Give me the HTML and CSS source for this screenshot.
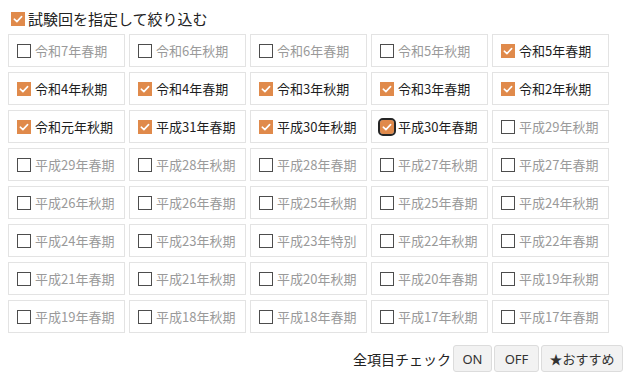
FILE: index.html
```html
<!DOCTYPE html>
<html lang="ja">
<head>
<meta charset="utf-8">
<title>試験回を指定して絞り込む</title>
<link rel="stylesheet" href="styles.css">
</head>
<body>
<div class="page">
  <div class="header">
    <span class="box on"><svg viewBox="0 0 14 14"><path d="M3.3 7.2 L5.9 9.6 L10.6 4.6"/></svg></span>
    <span class="header-text">試験回を指定して絞り込む</span>
  </div>
  <div class="grid">
    <div class="cell"><span class="box"></span><span class="label">令和7年春期</span></div>
    <div class="cell"><span class="box"></span><span class="label">令和6年秋期</span></div>
    <div class="cell"><span class="box"></span><span class="label">令和6年春期</span></div>
    <div class="cell"><span class="box"></span><span class="label">令和5年秋期</span></div>
    <div class="cell on"><span class="box on"><svg viewBox="0 0 14 14"><path d="M3.3 7.2 L5.9 9.6 L10.6 4.6"/></svg></span><span class="label">令和5年春期</span></div>

    <div class="cell on"><span class="box on"><svg viewBox="0 0 14 14"><path d="M3.3 7.2 L5.9 9.6 L10.6 4.6"/></svg></span><span class="label">令和4年秋期</span></div>
    <div class="cell on"><span class="box on"><svg viewBox="0 0 14 14"><path d="M3.3 7.2 L5.9 9.6 L10.6 4.6"/></svg></span><span class="label">令和4年春期</span></div>
    <div class="cell on"><span class="box on"><svg viewBox="0 0 14 14"><path d="M3.3 7.2 L5.9 9.6 L10.6 4.6"/></svg></span><span class="label">令和3年秋期</span></div>
    <div class="cell on"><span class="box on"><svg viewBox="0 0 14 14"><path d="M3.3 7.2 L5.9 9.6 L10.6 4.6"/></svg></span><span class="label">令和3年春期</span></div>
    <div class="cell on"><span class="box on"><svg viewBox="0 0 14 14"><path d="M3.3 7.2 L5.9 9.6 L10.6 4.6"/></svg></span><span class="label">令和2年秋期</span></div>

    <div class="cell on"><span class="box on"><svg viewBox="0 0 14 14"><path d="M3.3 7.2 L5.9 9.6 L10.6 4.6"/></svg></span><span class="label">令和元年秋期</span></div>
    <div class="cell on"><span class="box on"><svg viewBox="0 0 14 14"><path d="M3.3 7.2 L5.9 9.6 L10.6 4.6"/></svg></span><span class="label">平成31年春期</span></div>
    <div class="cell on"><span class="box on"><svg viewBox="0 0 14 14"><path d="M3.3 7.2 L5.9 9.6 L10.6 4.6"/></svg></span><span class="label">平成30年秋期</span></div>
    <div class="cell on"><span class="box on focus"><svg viewBox="0 0 14 14"><path d="M3.3 7.2 L5.9 9.6 L10.6 4.6"/></svg></span><span class="label">平成30年春期</span></div>
    <div class="cell"><span class="box"></span><span class="label">平成29年秋期</span></div>

    <div class="cell"><span class="box"></span><span class="label">平成29年春期</span></div>
    <div class="cell"><span class="box"></span><span class="label">平成28年秋期</span></div>
    <div class="cell"><span class="box"></span><span class="label">平成28年春期</span></div>
    <div class="cell"><span class="box"></span><span class="label">平成27年秋期</span></div>
    <div class="cell"><span class="box"></span><span class="label">平成27年春期</span></div>

    <div class="cell"><span class="box"></span><span class="label">平成26年秋期</span></div>
    <div class="cell"><span class="box"></span><span class="label">平成26年春期</span></div>
    <div class="cell"><span class="box"></span><span class="label">平成25年秋期</span></div>
    <div class="cell"><span class="box"></span><span class="label">平成25年春期</span></div>
    <div class="cell"><span class="box"></span><span class="label">平成24年秋期</span></div>

    <div class="cell"><span class="box"></span><span class="label">平成24年春期</span></div>
    <div class="cell"><span class="box"></span><span class="label">平成23年秋期</span></div>
    <div class="cell"><span class="box"></span><span class="label">平成23年特別</span></div>
    <div class="cell"><span class="box"></span><span class="label">平成22年秋期</span></div>
    <div class="cell"><span class="box"></span><span class="label">平成22年春期</span></div>

    <div class="cell"><span class="box"></span><span class="label">平成21年春期</span></div>
    <div class="cell"><span class="box"></span><span class="label">平成21年秋期</span></div>
    <div class="cell"><span class="box"></span><span class="label">平成20年秋期</span></div>
    <div class="cell"><span class="box"></span><span class="label">平成20年春期</span></div>
    <div class="cell"><span class="box"></span><span class="label">平成19年秋期</span></div>

    <div class="cell"><span class="box"></span><span class="label">平成19年春期</span></div>
    <div class="cell"><span class="box"></span><span class="label">平成18年秋期</span></div>
    <div class="cell"><span class="box"></span><span class="label">平成18年春期</span></div>
    <div class="cell"><span class="box"></span><span class="label">平成17年秋期</span></div>
    <div class="cell"><span class="box"></span><span class="label">平成17年春期</span></div>
  </div>
  <div class="actions">
    <span class="actions-label">全項目チェック</span>
    <button class="btn btn-on">ON</button>
    <button class="btn btn-off">OFF</button>
    <button class="btn btn-rec">★おすすめ</button>
  </div>
</div>
</body>
</html>
```
FILE: styles.css
```css
html, body {
  margin: 0;
  padding: 0;
  background: #ffffff;
}

body {
  font-family: "Noto Sans CJK JP", "Noto Sans", sans-serif;
  color: #222222;
}

.page {
  padding: 7px 3px 0 8px;
}

.header {
  display: flex;
  align-items: center;
  height: 23px;
  padding-left: 3px;
  gap: 3px;
}

.header-text {
  font-size: 15px;
  line-height: 20px;
  color: #222222;
}

.box {
  box-sizing: border-box;
  width: 14px;
  height: 14px;
  flex: 0 0 14px;
  border: 1px solid #4d4d4d;
  background: #ffffff;
  display: flex;
}

.box.on {
  border: none;
  background: #e08a4b;
}

.box svg {
  width: 14px;
  height: 14px;
}

.box svg path {
  fill: none;
  stroke: #ffffff;
  stroke-width: 1.6;
  stroke-linecap: round;
  stroke-linejoin: round;
}

.box.focus {
  outline: 2px solid #262626;
  border-radius: 3px;
}

.grid {
  margin-top: 4px;
  display: grid;
  grid-template-columns: repeat(5, 117px);
  grid-auto-rows: 33px;
  column-gap: 4px;
  row-gap: 5px;
}

.cell {
  box-sizing: border-box;
  border: 1px solid #e3e3e3;
  display: flex;
  align-items: center;
  padding-left: 8px;
  gap: 4px;
}

.label {
  font-size: 13px;
  line-height: 18px;
  color: #9a9a9a;
  white-space: nowrap;
}

.cell.on .label {
  color: #1e1e1e;
}

.actions {
  margin-top: 12px;
  display: flex;
  justify-content: flex-end;
  align-items: center;
  gap: 2px;
}

.actions-label {
  font-size: 14px;
  color: #222222;
  margin-right: 0;
}

.btn {
  box-sizing: border-box;
  height: 27px;
  padding: 0;
  border: 1px solid #dcdcdc;
  border-radius: 3px;
  background: #f2f2f2;
  color: #333333;
  font-family: "Noto Sans", "Noto Sans CJK JP", sans-serif;
  font-size: 13px;
  text-align: center;
}

.btn-on {
  width: 39px;
}

.btn-off {
  width: 45px;
}

.btn-rec {
  width: 82px;
  font-family: "Noto Sans CJK JP", sans-serif;
}
```
